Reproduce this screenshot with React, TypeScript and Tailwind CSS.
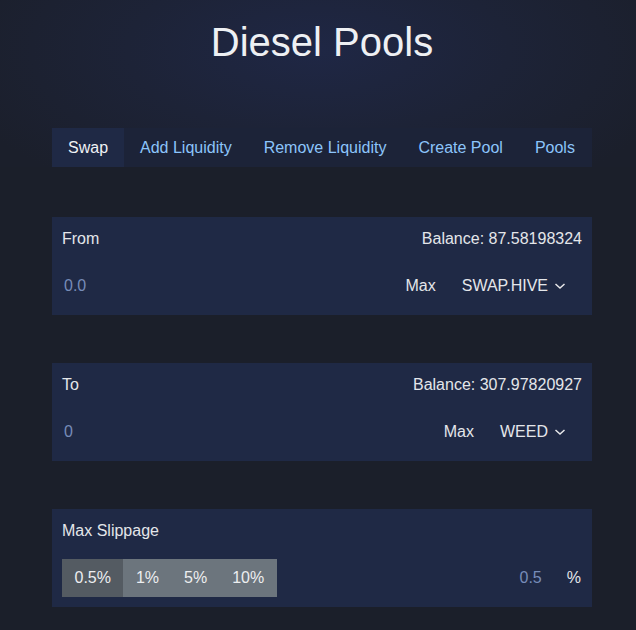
import React from "react";

const tabs = ["Swap", "Add Liquidity", "Remove Liquidity", "Create Pool", "Pools"];

function Chevron() {
  return (
    <svg width="12" height="8" viewBox="0 0 12 8" className="ml-[6px]" fill="none">
      <path d="M1.5 2 L6 6 L10.5 2" stroke="#e8e8ea" strokeWidth="1.5" />
    </svg>
  );
}

function TokenCard({ label, balance, amount, token }: { label: string; balance: string; amount: string; token: string }) {
  return (
    <div className="flex flex-col gap-4 bg-[#1f2945] px-[10px] pb-[10px] pt-[10px]">
      <div className="flex h-6 items-center justify-between">
        <span>{label}</span>
        <span>Balance: {balance}</span>
      </div>
      <div className="flex h-[38px] items-center">
        <span className="pl-[2px] text-[#778cb8]">{amount}</span>
        <span className="ml-auto">Max</span>
        <span className="ml-[26px] flex items-center pr-4">
          {token}
          <Chevron />
        </span>
      </div>
    </div>
  );
}

export default function App() {
  return (
    <div className="min-h-[630px] bg-[#1b1f2a] font-['Liberation_Sans',Arial,sans-serif] text-base text-[#e4e6ea]">
      <div className="bg-[radial-gradient(ellipse_60%_100%_at_50%_30%,#1f2745_0%,#1d2337_50%,#1b1f2b_100%)]">
        <div className="ml-[52px] w-[540px]">
          <h1 className="pt-[18px] text-center text-[40px] leading-[48px] text-[#eef0f3]">Diesel Pools</h1>
          <nav className="mt-[62px] flex h-[39px] whitespace-nowrap bg-[#1c2338]">
            {tabs.map((t, i) => (
              <span
                key={t}
                className={
                  i === 0
                    ? "flex items-center bg-[#1f2945] px-4 text-[#f0f2f5]"
                    : "flex items-center px-4 text-[#8cc5fb]"
                }
              >
                {t}
              </span>
            ))}
          </nav>
        </div>
      </div>
      <div className="ml-[52px] flex w-[540px] flex-col gap-12 pt-[50px] pb-[23px]">
        <TokenCard label="From" balance="87.58198324" amount="0.0" token="SWAP.HIVE" />
        <TokenCard label="To" balance="307.97820927" amount="0" token="WEED" />
        <div className="flex flex-col gap-4 bg-[#1f2945] px-[10px] pb-[10px] pt-[10px]">
          <div className="flex h-6 items-center">Max Slippage</div>
          <div className="flex h-[38px] items-center">
            <div className="flex h-[38px] text-[#eceef0]">
              <span className="flex items-center bg-[#545b62] px-[12.5px]">0.5%</span>
              <span className="flex items-center bg-[#6c757d] px-[12.5px]">1%</span>
              <span className="flex items-center bg-[#6c757d] px-[12.5px]">5%</span>
              <span className="flex items-center bg-[#6c757d] px-[12.5px]">10%</span>
            </div>
            <span className="ml-auto text-[#778cb8]">0.5</span>
            <span className="ml-[25px] pr-px">%</span>
          </div>
        </div>
      </div>
    </div>
  );
}
